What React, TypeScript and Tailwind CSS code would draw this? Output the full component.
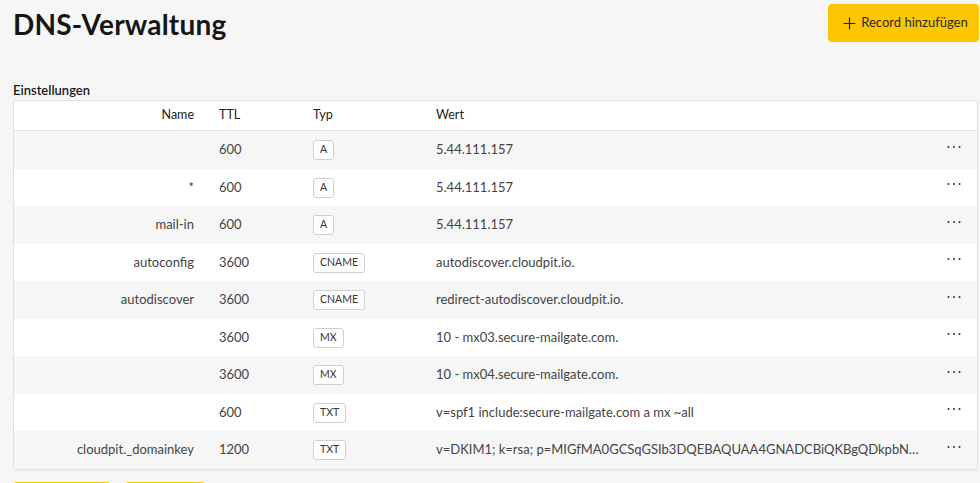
import React from "react";

const rows = [
  { name: "", ttl: "600", typ: "A", wert: "5.44.111.157" },
  { name: "*", ttl: "600", typ: "A", wert: "5.44.111.157" },
  { name: "mail-in", ttl: "600", typ: "A", wert: "5.44.111.157" },
  { name: "autoconfig", ttl: "3600", typ: "CNAME", wert: "autodiscover.cloudpit.io." },
  { name: "autodiscover", ttl: "3600", typ: "CNAME", wert: "redirect-autodiscover.cloudpit.io." },
  { name: "", ttl: "3600", typ: "MX", wert: "10 - mx03.secure-mailgate.com." },
  { name: "", ttl: "3600", typ: "MX", wert: "10 - mx04.secure-mailgate.com." },
  { name: "", ttl: "600", typ: "TXT", wert: "v=spf1 include:secure-mailgate.com a mx ~all" },
  { name: "cloudpit._domainkey", ttl: "1200", typ: "TXT", wert: "v=DKIM1; k=rsa; p=MIGfMA0GCSqGSIb3DQEBAQUAA4GNADCBiQKBgQDkpbNr8g…" },
];

function Dots() {
  return (
    <svg width="14" height="4" viewBox="0 0 14 4" fill="#333">
      <circle cx="1.5" cy="2" r="1" />
      <circle cx="7" cy="2" r="1" />
      <circle cx="12.5" cy="2" r="1" />
    </svg>
  );
}

export default function App() {
  return (
    <div className="min-h-[483px] bg-[#f6f6f6] text-[#222] overflow-hidden" style={{ fontFamily: "Lato, 'Noto Sans', sans-serif" }}>
      <div className="flex items-start justify-between pl-[13px] pr-[1px] pt-[4px]">
        <h1 className="text-[28px] font-bold leading-[36px] mt-[2px] tracking-[0.2px] text-[#161616]">DNS-Verwaltung</h1>
        <button className="flex items-center gap-[5px] h-[38px] w-[151px] justify-center rounded-[4px] bg-[#fcc600] text-[13px] text-[#2a2a2a] pl-[4px]">
          <svg width="13" height="13" viewBox="0 0 13 13" stroke="#222" strokeWidth="1.2"><path d="M6.5 0.5v12M0.5 6.5h12" /></svg>
          Record hinzufügen
        </button>
      </div>
      <div className="pl-[13px] pr-[2px] mt-[40px]">
        <div className="text-[13px] font-semibold leading-[16px] text-[#1a1a1a]">Einstellungen</div>
        <div className="mt-[2px] bg-white border border-[#e2e2e2] rounded-[3px] shadow-[0_1px_2px_rgba(0,0,0,0.06)]">
          <div className="flex items-center h-[30px] border-b border-[#e4e4e4] text-[12.5px] text-[#222]">
            <div className="w-[180px] text-right">Name</div>
            <div className="w-[94px] pl-[25px] box-content">TTL</div>
            <div className="w-[123px]">Typ</div>
            <div>Wert</div>
          </div>
          {rows.map((r, i) => (
            <div key={i} className={`flex items-center h-[37.5px] text-[13px] text-[#444] ${i % 2 === 0 ? "bg-[#f6f6f6]" : "bg-white"}`}>
              <div className="w-[180px] text-right">{r.name}</div>
              <div className="w-[94px] pl-[25px] box-content">{r.ttl}</div>
              <div className="w-[123px]">
                <span className="inline-flex items-center h-[20px] px-[6px] border border-[#cfcfcf] rounded-[3px] bg-white text-[10.5px] text-[#333]">{r.typ}</span>
              </div>
              <div className="flex-1 truncate pr-[24px]">{r.wert}</div>
              <div className="w-[30px] flex pb-[6px]"><Dots /></div>
            </div>
          ))}
        </div>
        <div className="flex gap-[14px] mt-[12px]">
          <div className="h-[20px] w-[98px] rounded-[4px] bg-[#fcc600]" />
          <div className="h-[20px] w-[81px] rounded-[4px] bg-[#fcc600]" />
        </div>
      </div>
    </div>
  );
}
